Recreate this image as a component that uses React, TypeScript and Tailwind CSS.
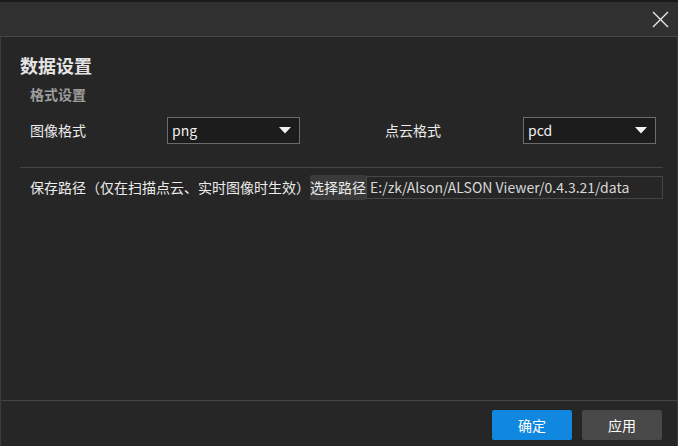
const font = { fontFamily: '"Noto Sans CJK SC", "Noto Sans", sans-serif' };

function Caret() {
  return (
    <svg width="12" height="7" viewBox="0 0 12 7" className="shrink-0">
      <path d="M0 0 H12 L6 6.5 Z" fill="#f2f2f2" />
    </svg>
  );
}

type SelectProps = { value: string };

function Select({ value }: SelectProps) {
  return (
    <div className="flex h-[27px] w-[133px] items-center justify-between border border-[#6b6b6b] bg-[#1c1c1c] pl-[4px] pr-[8px] text-[14px] text-[#f0f0f0]">
      <span>{value}</span>
      <Caret />
    </div>
  );
}

export default function App() {
  return (
    <div
      className="flex h-[446px] w-[678px] flex-col bg-[#1a1a1a] pt-[2px] antialiased"
      style={font}
    >
      {/* title bar */}
      <div className="flex h-[35px] shrink-0 items-center justify-end border-b border-[#474747] bg-[#303030] pr-[9px]">
        <svg width="17" height="17" viewBox="0 0 17 17">
          <path d="M1 1 L16 16 M16 1 L1 16" stroke="#e8e8e8" strokeWidth="1.4" />
        </svg>
      </div>

      <div className="flex flex-1 flex-col border-x border-[#3c3c3c] bg-[#262626]">
        <div className="flex-1 pl-[19px] pr-[14px] pt-[16px]">
          <div className="text-[18px] font-bold leading-[24px] text-[#e4e4e4]">数据设置</div>
          <div className="mt-[7px] pl-[10px] text-[14px] font-bold leading-[20px] text-[#9d9d9d]">格式设置</div>

          <div className="mt-[13px] flex items-center pl-[10px] text-[14px] text-[#ececec]">
            <span className="w-[137px]">图像格式</span>
            <Select value="png" />
            <span className="ml-[85px] w-[138px]">点云格式</span>
            <Select value="pcd" />
          </div>

          <div className="mt-[23px] h-px bg-[#464646]" />

          <div className="mt-[7px] flex h-[25px] items-center pl-[10px] text-[14px] text-[#ececec]">
            <span className="w-[280px]">保存路径（仅在扫描点云、实时图像时生效）</span>
            <div className="flex h-[25px] w-[56px] items-center justify-center rounded-[2px] bg-[#3a3a3a]">选择路径</div>
            <div className="flex h-[23px] flex-1 items-center border border-[#454545] pl-[3px] text-[#d8d8d8]">
              E:/zk/Alson/ALSON Viewer/0.4.3.21/data
            </div>
          </div>
        </div>

        {/* footer */}
        <div className="flex h-[46px] shrink-0 items-start justify-end gap-[10px] border-t border-[#444444] pr-[15px] pt-[9px] text-[14px] text-white">
          <button type="button" className="flex h-[30px] w-[80px] items-center justify-center rounded-[2px] bg-[#1188e0]">
            确定
          </button>
          <button type="button" className="flex h-[30px] w-[80px] items-center justify-center rounded-[2px] bg-[#484848]">
            应用
          </button>
        </div>
      </div>
    </div>
  );
}
